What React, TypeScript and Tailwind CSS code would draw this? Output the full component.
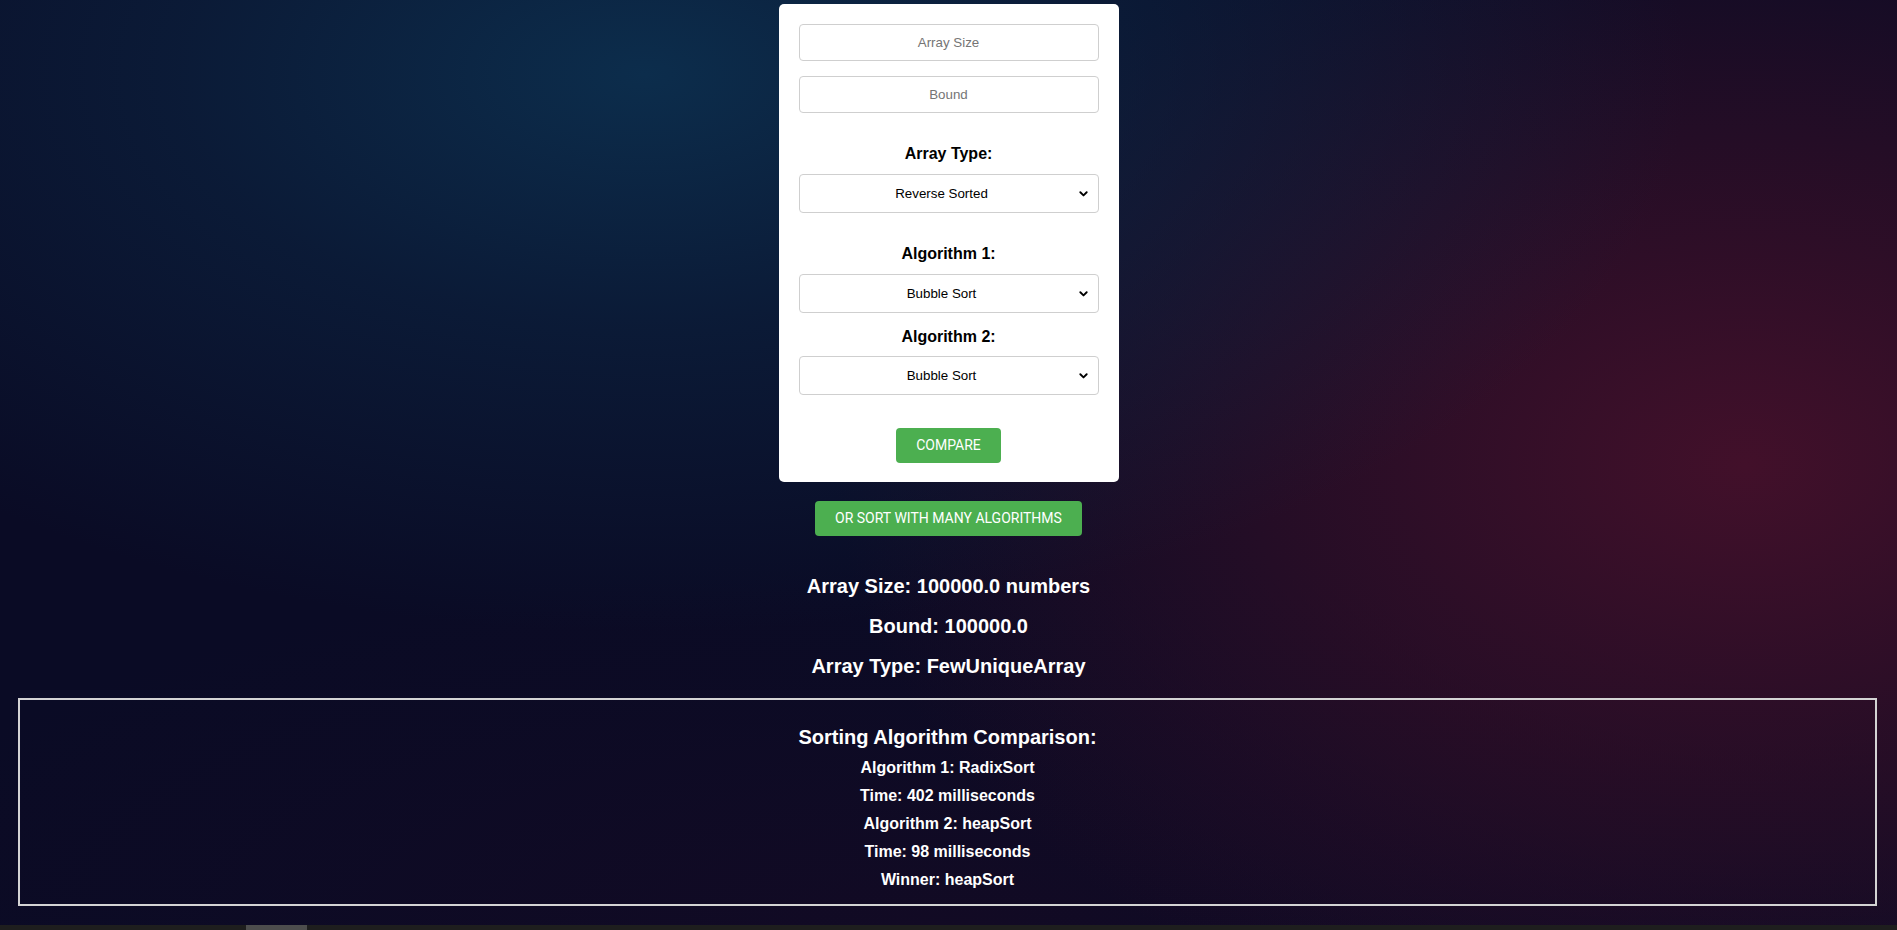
const arrayTypes = ["Random", "Sorted", "Reverse Sorted", "Few Unique"];
const algorithms = ["Bubble Sort", "Selection Sort", "Insertion Sort", "Merge Sort", "Quick Sort", "Heap Sort", "Radix Sort"];

function Chevron() {
  return (
    <svg className="pointer-events-none absolute right-[11px] top-1/2 -translate-y-1/2 w-[9px] h-[6px]" viewBox="0 0 10 7" fill="none">
      <path d="M1.3 1.5 5 5.2 8.7 1.5" stroke="#000" strokeWidth="2.2" strokeLinecap="round" strokeLinejoin="round" />
    </svg>
  );
}

function Select({ value, options }: { value: string; options: string[] }) {
  return (
    <div className="relative w-full">
      <select
        defaultValue={value}
        className="w-full h-[39px] appearance-none rounded-[4px] border border-[#cfcfcf] bg-white text-center text-[13.33px] text-black [text-align-last:center] outline-none pr-[14px]"
      >
        {options.map((o) => (
          <option key={o}>{o}</option>
        ))}
      </select>
      <Chevron />
    </div>
  );
}

export default function App() {
  return (
    <div className="h-[930px] overflow-hidden flex flex-col items-center bg-[#0a0b25] bg-[radial-gradient(ellipse_55%_60%_at_34%_8%,#0c2d4c_0%,rgba(12,45,76,0.45)_45%,transparent_100%),radial-gradient(ellipse_48%_65%_at_92%_50%,#42102a_0%,rgba(62,15,39,0.55)_50%,transparent_100%),radial-gradient(ellipse_60%_40%_at_50%_100%,#120a24_0%,transparent_100%)] font-['Liberation_Sans',Arial,sans-serif]">
      {/* Form card */}
      <div className="mt-[4px] w-[340px] rounded-[5px] bg-white px-[20px] pt-[20px] pb-[19px] flex flex-col items-center">
        <input
          placeholder="Array Size"
          className="w-full h-[37px] rounded-[4px] border border-[#cfcfcf] text-center text-[13.33px] placeholder:text-[#757575] outline-none"
        />
        <input
          placeholder="Bound"
          className="mt-[15px] w-full h-[37px] rounded-[4px] border border-[#cfcfcf] text-center text-[13.33px] placeholder:text-[#757575] outline-none"
        />

        <label className="mt-[32px] text-[16px] leading-[18px] font-bold text-black">Array Type:</label>
        <div className="mt-[11px] w-full">
          <Select value="Reverse Sorted" options={arrayTypes} />
        </div>

        <label className="mt-[32px] text-[16px] leading-[18px] font-bold text-black">Algorithm 1:</label>
        <div className="mt-[11px] w-full">
          <Select value="Bubble Sort" options={algorithms} />
        </div>

        <label className="mt-[15px] text-[16px] leading-[18px] font-bold text-black">Algorithm 2:</label>
        <div className="mt-[10px] w-full">
          <Select value="Bubble Sort" options={algorithms} />
        </div>

        <button className="mt-[33px] h-[35px] px-[20px] rounded-[4px] bg-[#4caf50] text-white text-[14px] font-['Roboto',sans-serif] uppercase">
          Compare
        </button>
      </div>

      <button className="mt-[19px] h-[35px] px-[20px] rounded-[4px] bg-[#4caf50] text-white text-[14px] font-['Roboto',sans-serif] uppercase">
        Or sort with many algorithms
      </button>

      {/* Input summary */}
      <div className="mt-[39px] flex flex-col items-center gap-[17px] text-white text-[20px] leading-[23px] font-bold">
        <p>Array Size: 100000.0 numbers</p>
        <p>Bound: 100000.0</p>
        <p>Array Type: FewUniqueArray</p>
      </div>

      {/* Comparison result */}
      <div className="mt-[20px] self-stretch ml-[18px] mr-[20px] h-[208px] border-2 border-[#d4d4d4] flex flex-col items-center pt-[26px] text-white font-bold">
        <h3 className="text-[20px] leading-[23px]">Sorting Algorithm Comparison:</h3>
        <div className="mt-[9px] flex flex-col items-center gap-[9px] text-[16px] leading-[19px]">
          <p>Algorithm 1: RadixSort</p>
          <p>Time: 402 milliseconds</p>
          <p>Algorithm 2: heapSort</p>
          <p>Time: 98 milliseconds</p>
          <p>Winner: heapSort</p>
        </div>
      </div>

      {/* horizontal scrollbar strip */}
      <div className="mt-auto self-stretch h-[5px] bg-[#1e1e1e] flex">
        <div className="ml-[246px] w-[61px] bg-[#4d4d4d]" />
      </div>
    </div>
  );
}
